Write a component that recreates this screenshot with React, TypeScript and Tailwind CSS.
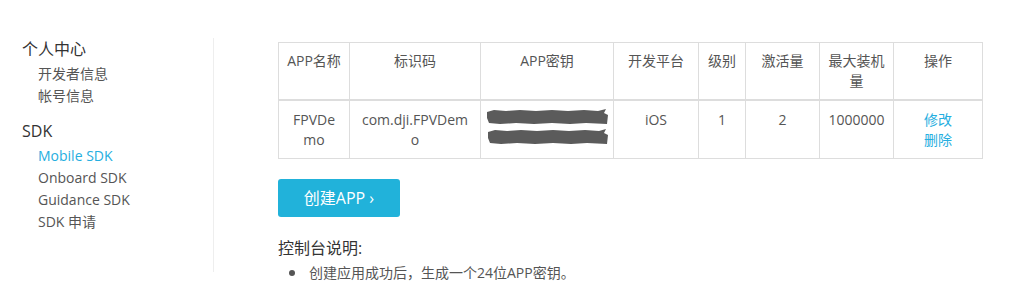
import React from "react";

const font = { fontFamily: '"Open Sans", "Noto Sans CJK SC", sans-serif' };

function Scribble({ w, ml }: { w: number; ml: number }) {
  return (
    <svg width={w} height={16} viewBox={`0 0 ${w} 16`} style={{ marginLeft: ml }} className="block">
      <path
        d={`M1 3 L8 1 L20 2 L34 1 L50 2 L66 1 L82 2 L98 1 L112 2 L${w - 2} 0 L${w - 4} 4 L${w} 6 L${w - 1} 15 L100 14 L84 15 L66 14 L48 15 L30 14 L14 15 L3 14 L1 9 Z`}
        fill="#5b5b5b"
      />
    </svg>
  );
}

export default function App() {
  const cols = [71, 131, 133, 85, 47, 74, 74, 89];
  const th = "border border-[#dddddd] border-b-2 align-top px-2 pt-[8px] pb-2 font-normal text-[14px] leading-[20px] text-[#555]";
  const td = "border border-[#dddddd] align-top px-2 pt-[9px] pb-2 text-[14px] leading-[20px] text-[#555] break-all";
  return (
    <div className="w-[1036px] h-[286px] bg-white overflow-hidden flex" style={font}>
      <div className="w-[214px] pt-[38px] pl-[22px]">
        <div className="border-r border-[#eeeeee] h-[234px] mt-[4px]">
          <div className="text-[16px] leading-[22px] text-[#333] -mt-[4px]">个人中心</div>
          <div className="pl-[16px] text-[14px] leading-[22px] text-[#555] mt-[3px]">
            <div>开发者信息</div>
            <div>帐号信息</div>
          </div>
          <div className="text-[16px] leading-[22px] text-[#333] mt-[13px]">SDK</div>
          <div className="pl-[16px] text-[14px] leading-[22px] text-[#555] mt-[3px]">
            <div className="text-[#25aee0]">Mobile SDK</div>
            <div>Onboard SDK</div>
            <div>Guidance SDK</div>
            <div>SDK 申请</div>
          </div>
        </div>
      </div>
      <div className="pl-[64px] pt-[42px]">
        <table className="table-fixed border-collapse w-[704px] text-center">
          <colgroup>
            {cols.map((w, i) => (
              <col key={i} style={{ width: w }} />
            ))}
          </colgroup>
          <thead>
            <tr className="h-[57px]">
              <th className={th}>APP名称</th>
              <th className={th}>标识码</th>
              <th className={th}>APP密钥</th>
              <th className={th}>开发平台</th>
              <th className={th}>级别</th>
              <th className={th}>激活量</th>
              <th className={th}>最大装机量</th>
              <th className={th}>操作</th>
            </tr>
          </thead>
          <tbody>
            <tr className="h-[56px]">
              <td className={td}>FPVDemo</td>
              <td className={td}>com.dji.FPVDemo</td>
              <td className="border border-[#dddddd] align-top px-[5px] pt-[8px] pb-1">
                <div className="flex flex-col gap-[4px] items-start [filter:blur(0.5px)]">
                  <Scribble w={122} ml={0} />
                  <Scribble w={121} ml={1} />
                </div>
              </td>
              <td className={td}>iOS</td>
              <td className={td}>1</td>
              <td className={td}>2</td>
              <td className={td}>1000000</td>
              <td className={td}>
                <div className="text-[#25aee0]">修改</div>
                <div className="text-[#25aee0]">删除</div>
              </td>
            </tr>
          </tbody>
        </table>
        <button className="mt-[20px] w-[122px] h-[38px] rounded-[3px] bg-[#21b2da] text-white text-[16px] flex items-center justify-center">
          创建APP ›
        </button>
        <div className="mt-[20px] text-[16px] leading-[22px] text-[#333]">控制台说明:</div>
        <ul className="mt-[4px] pl-[11px] text-[14px] leading-[20px] text-[#555]">
          <li className="flex items-center">
            <span className="w-[6px] h-[6px] rounded-full bg-[#555] mr-[14px]" />
            创建应用成功后，生成一个24位APP密钥。
          </li>
        </ul>
      </div>
    </div>
  );
}
